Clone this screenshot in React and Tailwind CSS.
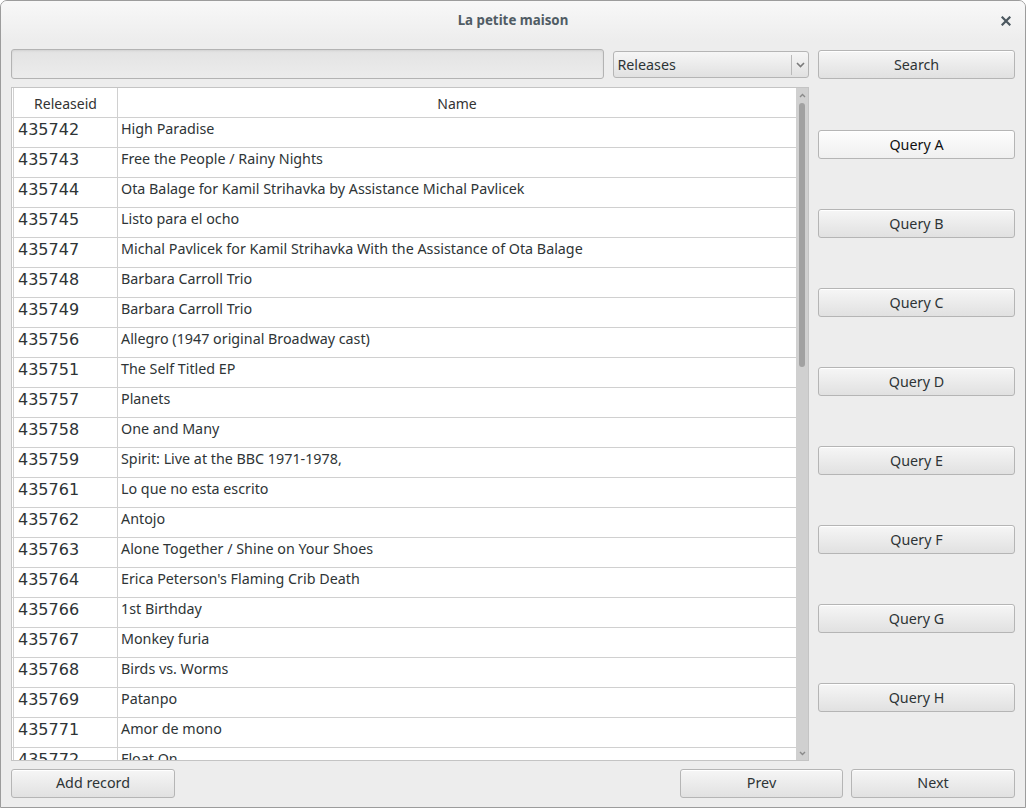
import React from "react";

const rows = [
  ["435742", "High Paradise"],
  ["435743", "Free the People / Rainy Nights"],
  ["435744", "Ota Balage for Kamil Strihavka by Assistance Michal Pavlicek"],
  ["435745", "Listo para el ocho"],
  ["435747", "Michal Pavlicek for Kamil Strihavka With the Assistance of Ota Balage"],
  ["435748", "Barbara Carroll Trio"],
  ["435749", "Barbara Carroll Trio"],
  ["435756", "Allegro (1947 original Broadway cast)"],
  ["435751", "The Self Titled EP"],
  ["435757", "Planets"],
  ["435758", "One and Many"],
  ["435759", "Spirit: Live at the BBC 1971-1978,"],
  ["435761", "Lo que no esta escrito"],
  ["435762", "Antojo"],
  ["435763", "Alone Together / Shine on Your Shoes"],
  ["435764", "Erica Peterson's Flaming Crib Death"],
  ["435766", "1st Birthday"],
  ["435767", "Monkey furia"],
  ["435768", "Birds vs. Worms"],
  ["435769", "Patanpo"],
  ["435771", "Amor de mono"],
  ["435772", "Float On"],
];

const btn =
  "flex items-center justify-center h-[29px] rounded-[3px] border border-[#b5b5b5] bg-gradient-to-b from-[#f6f6f6] to-[#e1e1e1] text-[14.3px] text-[#2e3436] font-['Noto_Sans',sans-serif] shadow-[inset_0_1px_0_#fff]";
const btnA =
  "flex items-center justify-center h-[29px] rounded-[3px] border border-[#b5b5b5] bg-gradient-to-b from-[#fdfdfd] to-[#f0f0f0] text-[14.3px] text-[#111] font-['Noto_Sans',sans-serif] shadow-[inset_0_1px_0_#fff]";

export default function App() {
  return (
    <div className="w-[1026px] h-[808px] bg-[#ededed] border border-[#9c9c9c] rounded-t-[7px] flex flex-col overflow-hidden font-['Noto_Sans',sans-serif]">
      {/* title bar */}
      <div className="h-[40px] shrink-0 relative flex items-center justify-center bg-gradient-to-b from-[#f8f8f8] to-[#ededed]">
        <span className="text-[13.3px] font-bold text-[#505c64]">La petite maison</span>
        <svg className="absolute right-[14px] top-[15px]" width="10" height="10" viewBox="0 0 10 10">
          <path d="M1.5 1.5 L8.5 8.5 M8.5 1.5 L1.5 8.5" stroke="#4b575f" strokeWidth="2.2" strokeLinecap="square" />
        </svg>
      </div>

      <div className="flex-1 flex flex-col px-[10px] pt-[8px]">
        {/* search row */}
        <div className="flex items-center h-[30px] gap-[8px]">
          <div className="w-[594px] h-[30px] rounded-[3px] border border-[#b3b3b3] bg-gradient-to-b from-[#e3e3e3] to-[#ececec] shadow-[inset_0_1px_2px_rgba(0,0,0,0.08)]" />
          <div className="w-[196px] h-[27px] ml-[1px] mt-[1px] rounded-[3px] border border-[#b5b5b5] bg-gradient-to-b from-[#f6f6f6] to-[#e1e1e1] flex items-center">
            <span className="flex-1 pl-[3px] pt-[1px] text-[14.3px] text-[#2e3436]">Releases</span>
            <div className="w-px h-[20px] bg-[#b9b9b9]" />
            <div className="w-[16px] flex items-center justify-center">
              <svg width="9" height="6" viewBox="0 0 9 6">
                <path d="M1 1 L4.5 4.5 L8 1" stroke="#7a7a7a" strokeWidth="1.6" fill="none" />
              </svg>
            </div>
          </div>
          <div className={btn + " w-[197px] ml-[1px] pt-[2px]"}>Search</div>
        </div>

        {/* middle */}
        <div className="flex mt-[8px] h-[674px]">
          <div className="w-[798px] h-full border border-[#c4c4c4] bg-white flex overflow-hidden">
            <div className="flex-1 flex flex-col overflow-hidden">
              {/* header */}
              <div className="flex h-[30px] shrink-0 border-b border-[#d0d0d0]">
                <div className="w-[2px] border-r border-[#d0d0d0]" />
                <div className="w-[104px] border-r border-[#d0d0d0] flex items-center justify-center pt-[2px] text-[14px] text-[#333]">Releaseid</div>
                <div className="flex-1 flex items-center justify-center pt-[2px] text-[14px] text-[#333]">Name</div>
              </div>
              {rows.map(([id, name]) => (
                <div key={id} className="flex h-[30px] shrink-0 border-b border-[#d0d0d0]">
                  <div className="w-[2px] border-r border-[#d0d0d0]" />
                  <div className="w-[104px] border-r border-[#d0d0d0] pl-[4px] pt-[2px] text-[16px] leading-[20px] text-[#2e3436] font-['DejaVu_Sans',sans-serif]">{id}</div>
                  <div className="flex-1 pl-[3px] pt-[1px] text-[14.3px] leading-[20px] text-[#2e3436]">{name}</div>
                </div>
              ))}
            </div>
            {/* scrollbar */}
            <div className="w-[12px] h-full bg-[#d0d0d0] flex flex-col items-center">
              <svg className="mt-[5px]" width="7" height="5" viewBox="0 0 7 5">
                <path d="M1 4 L3.5 1.5 L6 4" stroke="#8a8a8a" strokeWidth="1.4" fill="none" />
              </svg>
              <div className="mt-[5px] w-[6px] h-[264px] rounded-full bg-[#a1a1a1]" />
              <div className="flex-1" />
              <svg className="mb-[4px]" width="7" height="5" viewBox="0 0 7 5">
                <path d="M1 1 L3.5 3.5 L6 1" stroke="#8a8a8a" strokeWidth="1.4" fill="none" />
              </svg>
            </div>
          </div>

          <div className="ml-[9px] w-[197px] flex flex-col pt-[43px] gap-[50px]">
            <div className={btnA}>Query A</div>
            {["B", "C", "D", "E", "F", "G", "H"].map((l) => (
              <div key={l} className={btn}>Query {l}</div>
            ))}
          </div>
        </div>

        {/* bottom */}
        <div className="flex mt-[7px] h-[30px] items-center">
          <div className={btn + " w-[164px]"}>Add record</div>
          <div className="flex-1" />
          <div className={btn + " w-[163px]"}>Prev</div>
          <div className={btn + " w-[164px] ml-[8px]"}>Next</div>
        </div>
      </div>
    </div>
  );
}
